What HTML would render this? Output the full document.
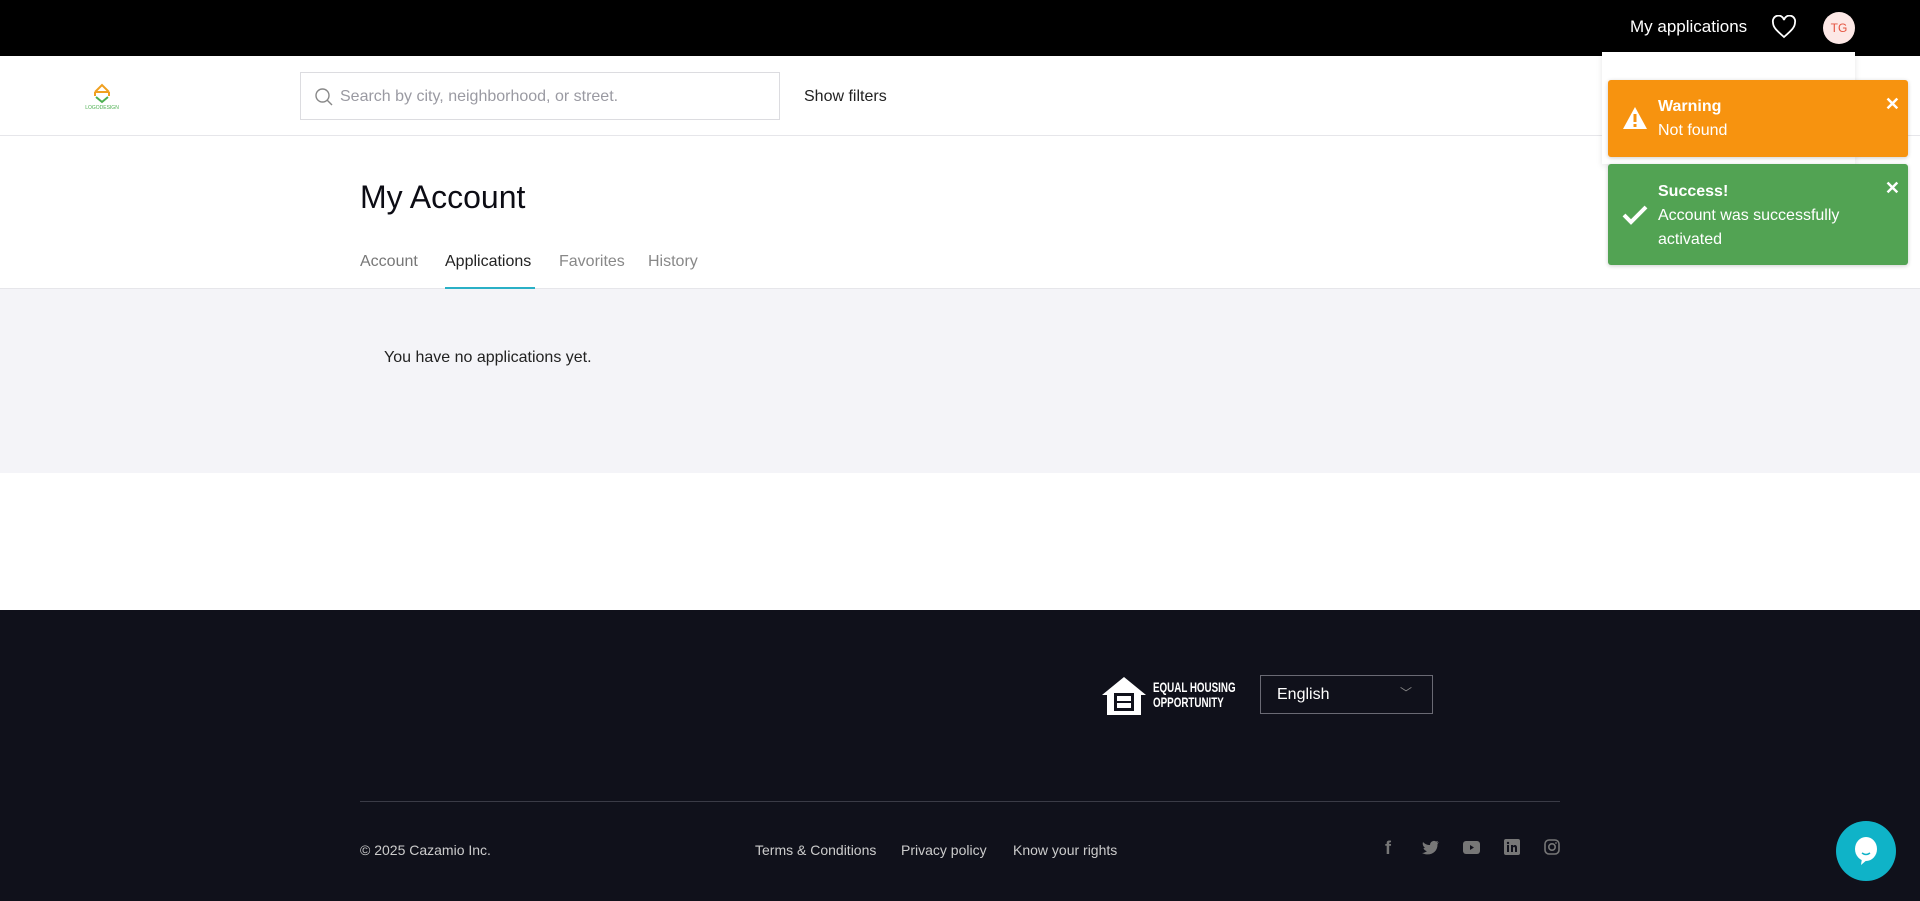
<!DOCTYPE html>
<html><head><meta charset="utf-8"><style>
*{margin:0;padding:0;box-sizing:border-box}
body{width:1920px;height:901px;overflow:hidden;font-family:"Liberation Sans",sans-serif;background:#fff;position:relative;color:#111}
.abs{position:absolute}
</style></head><body>
<div class="abs" style="left:0;top:0;width:1920px;height:56px;background:#000"></div>
<div class="abs" style="left:1630px;top:17px;color:#fff;font-size:17px">My applications</div>
<svg class="abs" style="left:1771px;top:15px" width="26" height="24" viewBox="0 0 26 24"><path d="M13 22 C5 15 2 12 2 7.5 A5.5 5.5 0 0 1 13 5 A5.5 5.5 0 0 1 24 7.5 C24 12 21 15 13 22Z" fill="none" stroke="#fff" stroke-width="1.8"/></svg>
<div class="abs" style="left:1823px;top:12px;width:32px;height:32px;border-radius:50%;background:#fde8e6;color:#e5533f;font-size:12px;text-align:center;line-height:32px">TG</div>
<div class="abs" style="left:0;top:56px;width:1920px;height:80px;border-bottom:1px solid #e6e6ea;background:#fff"></div>
<svg class="abs" style="left:83px;top:80px" width="38" height="32" viewBox="0 0 38 32"><path d="M12 12 L19 5 L26 12 M12 12 H26 M12 12 V16 M26 12 V16" fill="none" stroke="#f0a020" stroke-width="2"/><path d="M13 17 L19 22 L25 17" fill="none" stroke="#4caf50" stroke-width="2"/><text x="19" y="29" font-size="5" fill="#4caf50" text-anchor="middle" font-family="Liberation Sans">LOGODESIGN</text></svg>
<div class="abs" style="left:300px;top:72px;width:480px;height:48px;border:1px solid #dcdce0"></div>
<svg class="abs" style="left:314px;top:87px" width="20" height="20" viewBox="0 0 20 20"><circle cx="8.5" cy="8.5" r="6.5" fill="none" stroke="#888" stroke-width="1.4"/><path d="M13 13 L18 18" stroke="#888" stroke-width="1.4"/></svg>
<div class="abs" style="left:340px;top:88px;font-size:16px;color:#9a9aa2">Search by city, neighborhood, or street.</div>
<div class="abs" style="left:804px;top:88px;font-size:16px;color:#222">Show filters</div>
<div class="abs" style="left:1602px;top:52px;width:253px;height:112px;background:#fff;box-shadow:0 2px 6px rgba(0,0,0,.1)"></div>
<div class="abs" style="left:1608px;top:80px;width:300px;height:77px;background:#f7930f;border-radius:3px;box-shadow:0 1px 4px rgba(0,0,0,.2);color:#fff;font-size:16px">
<svg class="abs" style="left:14px;top:26px" width="26" height="24" viewBox="0 0 26 24"><path d="M13 1 L25 23 H1Z" fill="#fff"/><rect x="11.5" y="8" width="3" height="8" fill="#f7930f"/><rect x="11.5" y="18" width="3" height="3" fill="#f7930f"/></svg>
<div class="abs" style="left:50px;top:18px;font-weight:bold">Warning</div>
<div class="abs" style="left:50px;top:42px">Not found</div>
<div class="abs" style="right:8px;top:14px;font-weight:bold;font-size:18px">✕</div></div>
<div class="abs" style="left:1608px;top:164px;width:300px;height:101px;background:#52a353;border-radius:3px;box-shadow:0 1px 4px rgba(0,0,0,.2);color:#fff;font-size:16px;line-height:24px">
<svg class="abs" style="left:14px;top:40px" width="26" height="22" viewBox="0 0 26 22"><path d="M2 11 L9 18 L24 3" fill="none" stroke="#fff" stroke-width="4"/></svg>
<div class="abs" style="left:50px;top:16px;font-weight:bold">Success!</div>
<div class="abs" style="left:50px;top:40px;width:240px">Account was successfully activated</div>
<div class="abs" style="right:8px;top:12px;font-weight:bold;font-size:18px">✕</div></div>
<div class="abs" style="left:360px;top:179px;font-size:32px;color:#0c0c14">My Account</div>
<div class="abs" style="left:360px;top:253px;font-size:16px;color:#777">Account</div>
<div class="abs" style="left:445px;top:253px;font-size:16px;color:#222">Applications</div>
<div class="abs" style="left:559px;top:253px;font-size:16px;color:#888">Favorites</div>
<div class="abs" style="left:648px;top:253px;font-size:16px;color:#888">History</div>
<div class="abs" style="left:0;top:288px;width:1920px;height:185px;background:#f4f4f8;border-top:1px solid #e6e6ea"></div>
<div class="abs" style="left:445px;top:287px;width:90px;height:2px;background:#2ab0c6"></div>
<div class="abs" style="left:384px;top:349px;font-size:16px;color:#222">You have no applications yet.</div>
<div class="abs" style="left:0;top:610px;width:1920px;height:291px;background:#10111b"></div>
<svg class="abs" style="left:1101px;top:676px" width="46" height="40" viewBox="0 0 46 40"><path d="M23 1 L45 19 H40 V39 H6 V19 H1Z" fill="#fff"/><rect x="13" y="17" width="20" height="18" fill="#10111b"/><rect x="16" y="20" width="14" height="5" fill="#fff"/><rect x="16" y="27" width="14" height="5" fill="#fff"/></svg>
<div class="abs" style="left:1153px;top:680px;color:#fff;font-size:14px;font-weight:bold;line-height:15px;transform:scaleX(.7);transform-origin:left">EQUAL HOUSING<br>OPPORTUNITY</div>
<div class="abs" style="left:1260px;top:675px;width:173px;height:39px;border:1px solid #6a6a74;color:#fff;font-size:16px;padding:10px 16px">English<span style="position:absolute;right:20px;top:8px;color:#888;font-size:12px">﹀</span></div>
<div class="abs" style="left:360px;top:801px;width:1200px;height:1px;background:#3a3b46"></div>
<div class="abs" style="left:360px;top:842px;font-size:14px;color:#ccc">© 2025 Cazamio Inc.</div>
<div class="abs" style="left:755px;top:842px;font-size:14px;color:#ccc">Terms &amp; Conditions</div>
<div class="abs" style="left:901px;top:842px;font-size:14px;color:#ccc">Privacy policy</div>
<div class="abs" style="left:1013px;top:842px;font-size:14px;color:#ccc">Know your rights</div>
<div class="abs" style="left:1385px;top:838px;color:#777;font-size:18px;font-weight:bold">f</div>
<svg class="abs" style="left:1422px;top:840px" width="18" height="15" viewBox="0 0 18 15"><path d="M17 2 L15 3 L16 1 L14 1.5 A4 4 0 0 0 8 5 C5 5 3 4 1 2 C0 5 2 7 3 8 L1.5 8 C2 10 4 11 5 11 C4 12 2 13 0 13 C8 17 16 12 15.5 4Z" fill="#777"/></svg>
<svg class="abs" style="left:1463px;top:841px" width="17" height="13" viewBox="0 0 17 13"><rect width="17" height="13" rx="3" fill="#777"/><path d="M7 4 L11 6.5 L7 9Z" fill="#10111b"/></svg>
<svg class="abs" style="left:1504px;top:839px" width="16" height="16" viewBox="0 0 16 16"><rect width="16" height="16" rx="2" fill="#777"/><rect x="3" y="6" width="2" height="7" fill="#10111b"/><circle cx="4" cy="4" r="1.2" fill="#10111b"/><path d="M7 6 H9 V7 C10 5.5 13 5.5 13 8.5 V13 H11 V9 C11 7.5 9 7.5 9 9 V13 H7Z" fill="#10111b"/></svg>
<svg class="abs" style="left:1544px;top:839px" width="16" height="16" viewBox="0 0 16 16"><rect x="1" y="1" width="14" height="14" rx="4" fill="none" stroke="#777" stroke-width="1.6"/><circle cx="8" cy="8" r="3.2" fill="none" stroke="#777" stroke-width="1.6"/><circle cx="12" cy="4" r="0.9" fill="#777"/></svg>
<div class="abs" style="left:1836px;top:821px;width:60px;height:60px;border-radius:50%;background:#0fb3c8"></div>
<svg class="abs" style="left:1851px;top:836px" width="30" height="32" viewBox="0 0 30 32"><ellipse cx="15" cy="13" rx="11" ry="12" fill="#fff"/><path d="M11 22 L10 29 L17 23Z" fill="#fff"/><path d="M11 17 Q15 20 19 17" fill="none" stroke="#0fb3c8" stroke-width="1.5"/></svg>
</body></html>
